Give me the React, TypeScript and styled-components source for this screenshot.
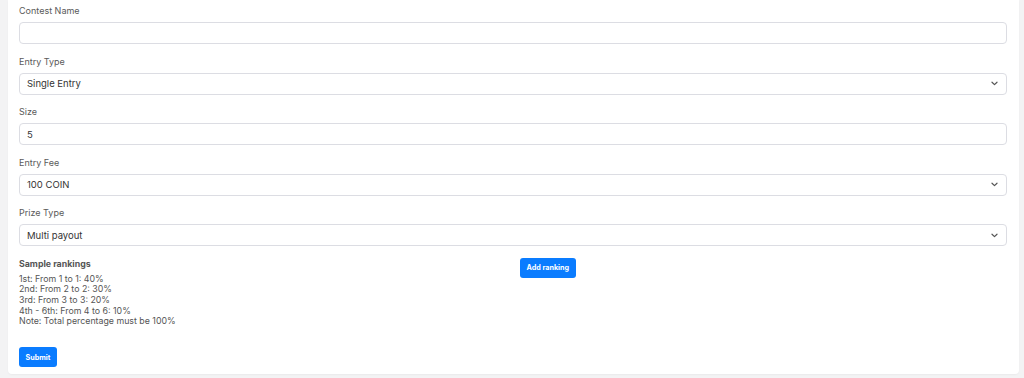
import React from 'react';
import styled, { createGlobalStyle } from 'styled-components';

const GlobalStyle = createGlobalStyle`
	html, body {
		margin: 0;
		padding: 0;
		background: #f3f3f4;
		font-family: Inter, "Noto Sans", "Liberation Sans", sans-serif;
	}
	* {
		box-sizing: border-box;
	}
`;

const Page = styled.div`
	padding: 0 5px 4px 8px;
	width: 1024px;
	height: 378px;
	overflow: hidden;
`;

const Card = styled.form`
	background: #ffffff;
	border-radius: 0 0 4px 4px;
	box-shadow: 0 1px 2px rgba(0, 0, 0, 0.04);
	padding: 4px 12px 7px 11px;
	display: flex;
	flex-flow: column nowrap;
`;

const Field = styled.div`
	display: flex;
	flex-flow: column nowrap;
	gap: 4px;
	margin-bottom: 10.5px;
`;

const Label = styled.label`
	font-size: 9px;
	line-height: 14px;
	color: #5a5a5a;
`;

const InputBox = styled.div`
	display: flex;
	flex-flow: row nowrap;
	align-items: center;
	justify-content: space-between;
	height: 22px;
	border: 1px solid #dcdde3;
	border-radius: 4px;
	padding: 0 8px 0 7px;
	font-size: 9.5px;
	color: #333333;
	background: #fff;

	& > svg {
		flex: none;
	}
`;

const Bottom = styled.div`
	display: grid;
	grid-template-columns: 1fr 1fr;
	column-gap: 14px;
`;

const Rankings = styled.div`
	display: flex;
	flex-flow: column nowrap;
	font-size: 8.8px;
	line-height: 10.7px;
	color: #555555;
`;

const RankTitle = styled.div`
	font-weight: 700;
	font-size: 8.8px;
	line-height: 14px;
	margin-bottom: 3px;
`;

const Button = styled.button<{ $top?: number }>`
	align-self: flex-start;
	justify-self: start;
	margin-top: ${p => p.$top ?? 0}px;
	background: #0a7cff;
	border: none;
	border-radius: 3px;
	color: #fff;
	font-family: inherit;
	font-weight: 700;
	font-size: 7.2px;
	height: 20px;
	padding: 0 6.5px;
	cursor: pointer;
`;

const Chevron = () => (
	<svg width="7" height="5" viewBox="0 0 7 5" fill="none">
		<path d="M1 1.2l2.5 2.4L6 1.2" stroke="#555" strokeWidth="1.2" strokeLinecap="round" strokeLinejoin="round" />
	</svg>
);

const fields: { label: string; value: string; select?: boolean }[] = [
	{ label: 'Contest Name', value: '' },
	{ label: 'Entry Type', value: 'Single Entry', select: true },
	{ label: 'Size', value: '5' },
	{ label: 'Entry Fee', value: '100 COIN', select: true },
	{ label: 'Prize Type', value: 'Multi payout', select: true },
];

const rankings = [
	'1st: From 1 to 1: 40%',
	'2nd: From 2 to 2: 30%',
	'3rd: From 3 to 3: 20%',
	'4th - 6th: From 4 to 6: 10%',
	'Note: Total percentage must be 100%',
];

export default function App() {
	return (
		<>
			<GlobalStyle />
			<Page>
				<Card onSubmit={e => e.preventDefault()}>
					{fields.map(f => (
						<Field key={f.label}>
							<Label>{f.label}</Label>
							<InputBox>
								<span>{f.value}</span>
								{f.select && <Chevron />}
							</InputBox>
						</Field>
					))}
					<Bottom>
						<Rankings>
							<RankTitle>Sample rankings</RankTitle>
							{rankings.map(r => (
								<div key={r}>{r}</div>
							))}
						</Rankings>
						<Button type="button" $top={1}>Add ranking</Button>
					</Bottom>
					<Button type="submit" $top={20}>Submit</Button>
				</Card>
			</Page>
		</>
	);
}
